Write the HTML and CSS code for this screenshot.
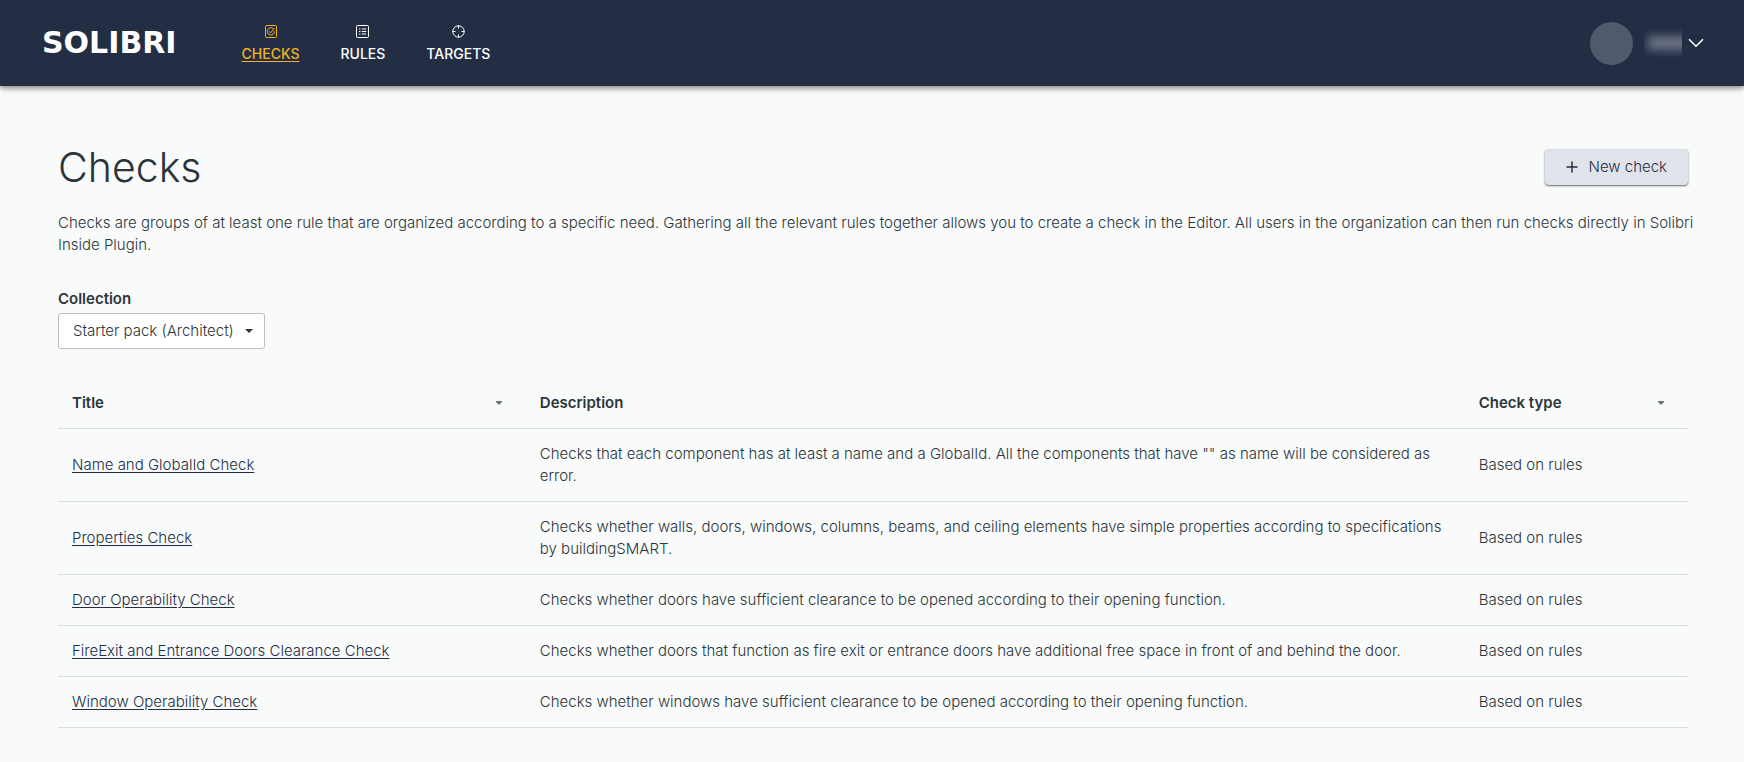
FILE: index.html
```
<!DOCTYPE html>
<html lang="en">
<head>
    <meta charset="UTF-8">
    <meta name="viewport" content="width=device-width, initial-scale=1.0">
    <title>Checks - Solibri</title>
    <link rel="stylesheet" href="styles.css">
</head>
<body>

    <header>
        <a class="logo" href="#">SOLIBRI</a>
        <nav>
            <a class="active" href="#checks">
                <svg width="12" height="13" viewBox="0 0 12 13" fill="none" stroke="currentColor">
                    <rect x="0.5" y="0.5" width="11" height="12" rx="1"/>
                    <path d="M8.2 3.6A3.6 3.6 0 1 0 9.5 6.3"/>
                    <path d="M4 6.2l1.6 1.7L9.6 3"/>
                </svg>
                <span>CHECKS</span>
            </a>
            <a href="#rules">
                <svg width="13" height="13" viewBox="0 0 13 13" fill="none" stroke="currentColor">
                    <rect x="0.5" y="0.5" width="12" height="12" rx="1"/>
                    <path d="M3 4h1.4M3 6.5h1.4M3 9h1.4M5.8 4h4.4M5.8 6.5h4.4M5.8 9h4.4"/>
                </svg>
                <span>RULES</span>
            </a>
            <a href="#targets">
                <svg width="13" height="13" viewBox="0 0 13 13" fill="none" stroke="currentColor">
                    <circle cx="6.5" cy="6.5" r="5.7"/>
                    <path d="M6.5 0.5v3M6.5 9.5v3M0.5 6.5h3M9.5 6.5h3"/>
                </svg>
                <span>TARGETS</span>
            </a>
        </nav>
        <button class="user-menu" type="button" aria-label="User menu">
            <span class="avatar"></span>
            <span class="user-name"></span>
            <svg width="16" height="10" viewBox="0 0 16 10" fill="none" stroke="currentColor" stroke-width="1.6">
                <path d="M1 1.2l7 7 7-7"/>
            </svg>
        </button>
    </header>

    <main>
        <div class="title-row">
            <h1>Checks</h1>
            <button class="new-check" type="button">
                <svg width="12" height="12" viewBox="0 0 12 12" fill="none" stroke="currentColor" stroke-width="1.5">
                    <path d="M6 0.5v11M0.5 6h11"/>
                </svg>
                New check
            </button>
        </div>

        <p class="intro">Checks are groups of at least one rule that are organized according to a specific need. Gathering all the relevant rules together allows you to create a check in the Editor. All users in the organization can then run checks directly in Solibri Inside Plugin.</p>

        <!-- Collection filter -->
        <div class="filter">
            <label for="collection">Collection</label>
            <div class="select-box">
                <select id="collection">
                    <option>Starter pack (Architect)</option>
                </select>
                <svg width="8" height="4" viewBox="0 0 8 4"><path d="M0 0h8L4 4z" fill="currentColor"/></svg>
            </div>
        </div>

        <!-- Checks table -->
        <table>
            <thead>
                <tr>
                    <th class="col-title">
                        <div class="sortable">Title
                            <svg width="6" height="4" viewBox="0 0 6 4"><path d="M0 0h6v1L3 4 0 1z" fill="currentColor"/></svg>
                        </div>
                    </th>
                    <th class="col-description">Description</th>
                    <th class="col-type">
                        <div class="sortable">Check type
                            <svg width="6" height="4" viewBox="0 0 6 4"><path d="M0 0h6v1L3 4 0 1z" fill="currentColor"/></svg>
                        </div>
                    </th>
                </tr>
            </thead>
            <tbody>
                <tr>
                    <td><a href="#">Name and GlobalId Check</a></td>
                    <td>Checks that each component has at least a name and a GlobalId. All the components that have "" as name will be considered as error.</td>
                    <td>Based on rules</td>
                </tr>
                <tr>
                    <td><a href="#">Properties Check</a></td>
                    <td>Checks whether walls, doors, windows, columns, beams, and ceiling elements have simple properties according to specifications by buildingSMART.</td>
                    <td>Based on rules</td>
                </tr>
                <tr>
                    <td><a href="#">Door Operability Check</a></td>
                    <td>Checks whether doors have sufficient clearance to be opened according to their opening function.</td>
                    <td>Based on rules</td>
                </tr>
                <tr>
                    <td><a href="#">FireExit and Entrance Doors Clearance Check</a></td>
                    <td>Checks whether doors that function as fire exit or entrance doors have additional free space in front of and behind the door.</td>
                    <td>Based on rules</td>
                </tr>
                <tr>
                    <td><a href="#">Window Operability Check</a></td>
                    <td>Checks whether windows have sufficient clearance to be opened according to their opening function.</td>
                    <td>Based on rules</td>
                </tr>
            </tbody>
        </table>
    </main>

</body>
</html>
```
FILE: styles.css
```
/* General Styles */
* {
    box-sizing: border-box;
}

body {
    margin: 0;
    font-family: Inter, sans-serif;
    font-size: 15px;
    font-weight: 300;
    line-height: 22px;
    color: #2b3539;
    background-color: #f9fbfb;
}

button, select {
    font: inherit;
    cursor: pointer;
}

/* Header */
header {
    display: flex;
    align-items: center;
    height: 86px;
    padding: 0 40px 0 42px;
    background-color: #232e45;
    color: white;
    box-shadow: 0 2px 6px rgba(0, 0, 0, 0.5);
}

.logo {
    color: white;
    font-family: "DejaVu Sans", sans-serif;
    font-size: 30px;
    font-weight: 700;
    line-height: 40px;
    text-decoration: none;
}

nav {
    display: flex;
    gap: 41px;
    margin-left: 65px;
    padding-top: 2px;
}

nav a {
    display: flex;
    flex-direction: column;
    align-items: center;
    gap: 6px;
    color: white;
    font-size: 14px;
    font-weight: 500;
    line-height: 20px;
    text-decoration: none;
}

nav .active {
    color: #f0b323;
}

nav .active span {
    text-decoration: underline;
    text-underline-offset: 2px;
}

.user-menu {
    display: flex;
    align-items: center;
    margin-left: auto;
    padding: 0;
    border: none;
    background: none;
    color: white;
}

.avatar {
    width: 43px;
    height: 43px;
    border-radius: 50%;
    background-color: #505a6d;
}

.user-name {
    width: 38px;
    height: 28px;
    margin: 0 6px 0 11px;
    overflow: hidden;
}

.user-name::before {
    content: "";
    display: block;
    width: 44px;
    height: 14px;
    margin: 7px 0 0 4px;
    background-color: #6c7486;
    filter: blur(5px);
}

/* Page */
main {
    padding: 54px 56px 32px 58px;
}

.title-row {
    display: flex;
    justify-content: space-between;
    align-items: center;
}

h1 {
    margin: 0;
    font-size: 41px;
    font-weight: 300;
    line-height: 54px;
}

.new-check {
    display: flex;
    align-items: center;
    gap: 11px;
    height: 36px;
    padding: 0 21px;
    border: none;
    border-radius: 4px;
    background-color: #e0e3e9;
    color: #232e45;
    box-shadow: 0 1px 2px rgba(0, 0, 0, 0.6);
}

.intro {
    margin: 18px -16px 32px 0;
}

.filter label {
    display: block;
    margin-bottom: 3px;
    font-weight: 600;
}

.select-box {
    display: inline-block;
    position: relative;
}

.select-box select {
    height: 36px;
    padding: 0 30px 0 14px;
    border: 1px solid #b9bec8;
    border-radius: 3px;
    background-color: white;
    color: #2b3539;
    appearance: none;
}

.select-box svg {
    position: absolute;
    top: 16px;
    right: 12px;
    pointer-events: none;
}

/* Table Styles */
table {
    width: 100%;
    margin-top: 29px;
    border-collapse: collapse;
    table-layout: fixed;
}

th, td {
    padding: 14px;
    border-bottom: 1px solid #dadddf;
    text-align: left;
}

th {
    font-weight: 600;
}

.col-title {
    width: 28.7%;
}

.col-type {
    width: 13.7%;
}

.sortable {
    display: flex;
    justify-content: space-between;
    align-items: center;
    padding-right: 10px;
}

.sortable svg {
    color: #6c7479;
}

td a {
    color: #232e45;
    text-underline-offset: 2px;
}
```
